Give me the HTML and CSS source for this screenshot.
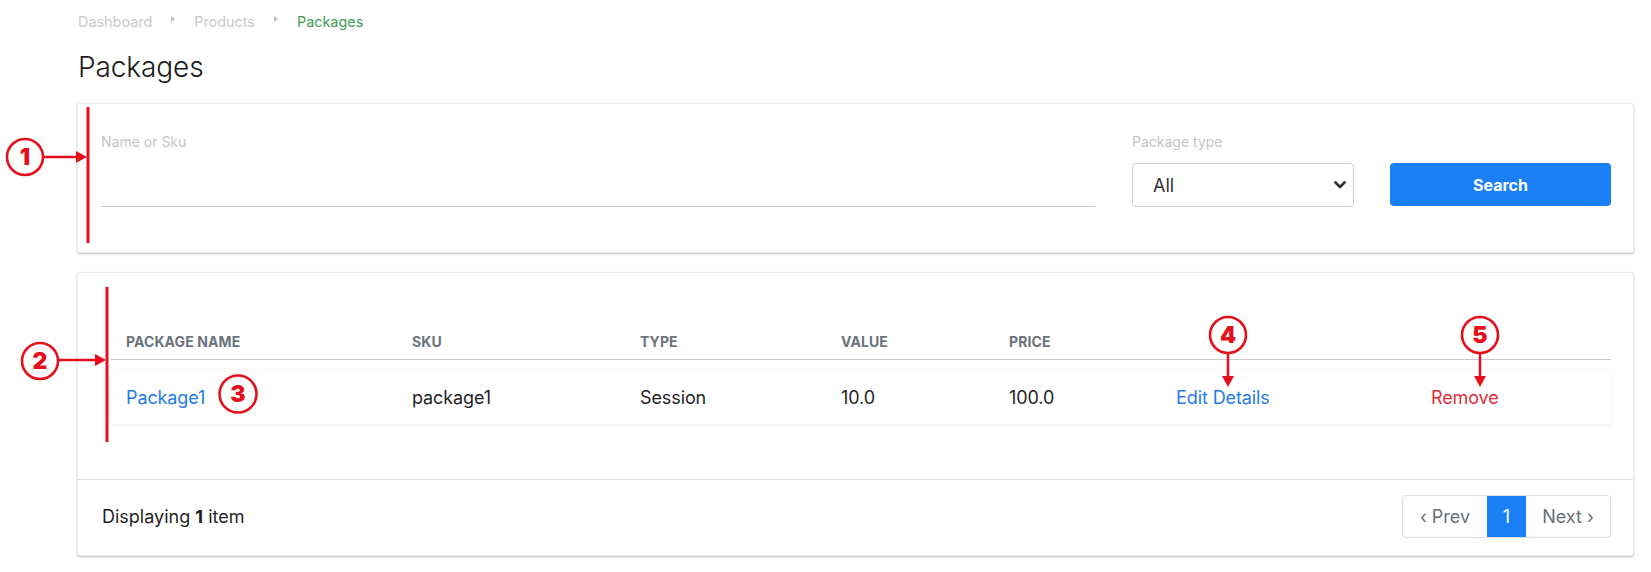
FILE: index.html
```html
<!DOCTYPE html>
<html lang="en">
<head>
<meta charset="utf-8">
<title>Packages</title>
<link rel="stylesheet" href="styles.css">
</head>
<body>
<div class="page">
  <nav class="crumbs">
    <span class="crumb">Dashboard</span>
    <span class="sep"></span>
    <span class="crumb">Products</span>
    <span class="sep"></span>
    <span class="crumb current">Packages</span>
  </nav>
  <h1 class="title">Packages</h1>

  <section class="card filter">
    <div class="field grow">
      <label class="lbl">Name or Sku</label>
      <div class="line-input"></div>
    </div>
    <div class="field sel">
      <label class="lbl">Package type</label>
      <div class="select">
        <span>All</span>
        <svg class="chev" width="12" height="8" viewBox="0 0 12 8"><path d="M1.5 1.5 L6 6 L10.5 1.5" fill="none" stroke="#333" stroke-width="2.6" stroke-linecap="round" stroke-linejoin="round"/></svg>
      </div>
    </div>
    <div class="field btnf">
      <button class="btn">Search</button>
    </div>
  </section>

  <section class="card list">
    <div class="tbl">
      <div class="thead">
        <div class="th">Package name</div>
        <div class="th">Sku</div>
        <div class="th">Type</div>
        <div class="th">Value</div>
        <div class="th">Price</div>
        <div class="th"></div>
        <div class="th"></div>
      </div>
      <div class="trow">
        <div class="td"><a class="link">Package1</a></div>
        <div class="td">package1</div>
        <div class="td">Session</div>
        <div class="td">10.0</div>
        <div class="td">100.0</div>
        <div class="td"><a class="link">Edit Details</a></div>
        <div class="td"><a class="danger">Remove</a></div>
      </div>
    </div>
    <footer class="foot">
      <div class="count">Displaying <b>1</b> item</div>
      <div class="pager">
        <span class="pg">‹ Prev</span>
        <span class="pg active">1</span>
        <span class="pg">Next ›</span>
      </div>
    </footer>
  </section>
</div>

<svg class="notes" width="1651" height="572" viewBox="0 0 1651 572">
  <g stroke="#e5101c" fill="none" stroke-width="3">
    <line x1="88" y1="107" x2="88" y2="243"/>
    <line x1="107" y1="287" x2="107" y2="442"/>
    <circle cx="25" cy="157" r="18" stroke-width="2.6"/>
    <circle cx="40" cy="361" r="18" stroke-width="2.6"/>
    <circle cx="238" cy="394" r="18.5" stroke-width="2.6"/>
    <circle cx="1228" cy="335" r="18" stroke-width="2.6"/>
    <circle cx="1480" cy="335" r="18" stroke-width="2.6"/>
    <line x1="43" y1="157" x2="78" y2="157" stroke-width="2.5"/>
    <line x1="58" y1="360" x2="97" y2="360" stroke-width="2.5"/>
    <line x1="1228" y1="353" x2="1228" y2="378" stroke-width="2.5"/>
    <line x1="1480" y1="353" x2="1480" y2="378" stroke-width="2.5"/>
  </g>
  <g fill="#e5101c">
    <polygon points="76,151 87,157 76,163"/>
    <polygon points="95,354 106,360 95,366"/>
    <polygon points="1222,376 1228,387 1234,376"/>
    <polygon points="1474,376 1480,387 1486,376"/>
  </g>
  <g fill="#e5101c" font-family="Inter, 'Liberation Sans', sans-serif" font-weight="900" font-size="23" text-anchor="middle">
    <text x="25" y="165">1</text>
    <text x="40" y="369">2</text>
    <text x="238" y="402">3</text>
    <text x="1228" y="343">4</text>
    <text x="1480" y="343">5</text>
  </g>
</svg>
</body>
</html>
```

FILE: styles.css
```css
* { box-sizing: border-box; }
html, body { margin: 0; padding: 0; background: #fff; }
body {
  font-family: Inter, "Noto Sans", "Liberation Sans", sans-serif;
  color: #222;
  position: relative;
  width: 1651px;
  height: 572px;
  overflow: hidden;
}
.page { padding: 12px 17px 0 77px; }

.crumbs { display: flex; align-items: center; height: 20px; font-size: 14.4px; line-height: 20px; padding-left: 1px; }
.crumb { color: #c9c9cc; }
.crumb.current { color: #3e9e55; }
.sep {
  width: 0; height: 0;
  border-top: 3px solid transparent; border-bottom: 3px solid transparent;
  border-left: 4px solid #bdbdc2;
  margin: 0 19px 6px 19px;
}

.title {
  margin: 17px 0 0 1px;
  font-size: 28px; font-weight: 300; line-height: 36px;
  color: #1a1a1a; letter-spacing: -0.1px;
  height: 38px;
}

.card {
  background: #fff;
  border: 1px solid #ececec;
  border-radius: 3px;
  box-shadow: 0 1px 2px rgba(0,0,0,0.28);
}

.filter {
  margin-top: 16px;
  height: 150px;
  display: flex; align-items: flex-end;
  padding: 30px 22px 45px 23px;
}
.field { display: flex; flex-direction: column; }
.field.grow { flex: 1; }
.field.sel { width: 222px; margin-left: 37px; }
.field.btnf { width: 221px; margin-left: 36px; }
.lbl { font-size: 14px; line-height: 16px; color: #c4c4c8; margin-bottom: 13px; }
.line-input { height: 44px; border-bottom: 1px solid #c8c8c8; }
.select {
  height: 44px; border: 1px solid #cfcfd2; border-radius: 4px;
  display: flex; align-items: center; justify-content: space-between;
  padding: 0 7px 0 20px; font-size: 18px; color: #333;
}
.btn {
  height: 43px; width: 100%; border: 0; border-radius: 4px;
  background: #1b7ff6; color: #fff; font-family: inherit;
  font-size: 16px; font-weight: 700; margin-bottom: 1px;
}

.list { margin-top: 19px; height: 284px; display: flex; flex-direction: column; }
.tbl { padding: 42px 22px 0 33px; height: 206px; }
.thead, .trow {
  display: grid;
  grid-template-columns: 286px 228px 201px 168px 167px 255px 195px;
}
.thead { height: 45px; align-items: end; border-bottom: 1px solid #c9cace; padding-bottom: 9px; }
.th {
  padding-left: 15px; font-size: 14px; font-weight: 700; line-height: 16px;
  color: #6c737b; text-transform: uppercase; letter-spacing: 0.1px;
}
.trow {
  margin-top: 11px; height: 53px; align-items: center;
  box-shadow: 0 1px 4px rgba(0,0,0,0.07);
}
.td { padding-left: 15px; font-size: 18px; color: #1f1f1f; letter-spacing: -0.1px; }
.link { color: #1f7be6; }
.danger { color: #dc2f3c; }

.foot {
  border-top: 1px solid #dfdfe2;
  flex: 1;
  display: flex; align-items: center; justify-content: space-between;
  padding: 0 22px 2px 24px;
}
.count { font-size: 18px; color: #1f1f1f; }
.count b { font-weight: 700; }
.pager { display: flex; border: 1px solid #dcdcdf; border-radius: 4px; height: 43px; overflow: hidden; }
.pg {
  display: flex; align-items: center; justify-content: center; width: 84px;
  font-size: 18px; color: #6a6f75;
}
.pg.active { background: #1b7ff6; color: #fff; width: 39px; }

.notes { position: absolute; left: 0; top: 0; pointer-events: none; }
```
